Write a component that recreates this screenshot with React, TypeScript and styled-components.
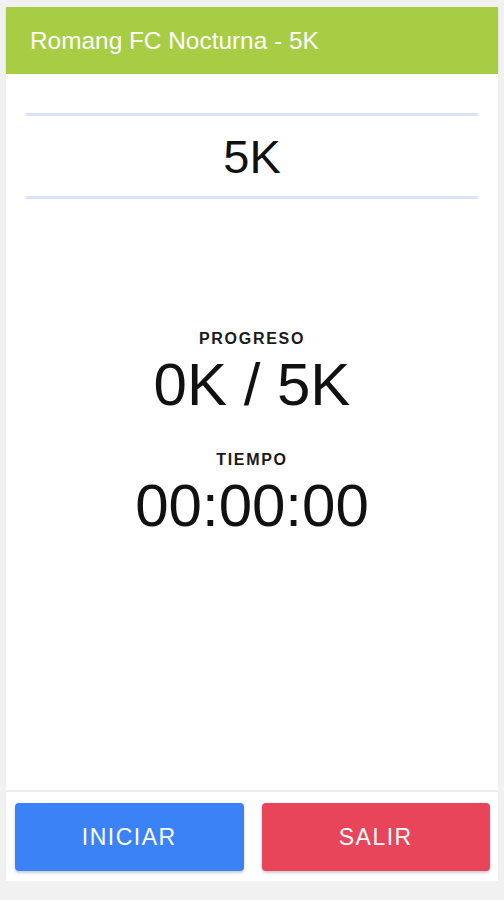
import styled, { createGlobalStyle } from "styled-components";

const GlobalStyle = createGlobalStyle`
  html, body {
    margin: 0;
    padding: 0;
    background: #f1f1f1;
    font-family: "Liberation Sans", Arial, sans-serif;
  }
`;

const Screen = styled.div`
  display: flex;
  flex-direction: column;
  margin: 7px 6px 0 6px;
  height: 874px;
`;

const Header = styled.header`
  display: flex;
  align-items: center;
  height: 67px;
  padding: 0 24px;
  background: #a7cd45;
  color: #fff;
  font-size: 24.4px;
  box-shadow: 0 1px 2px rgba(0, 0, 0, 0.12);
`;

const Body = styled.main`
  flex: 1;
  display: flex;
  flex-direction: column;
  background: #fff;
  padding: 39px 20px 0 20px;
`;

const Distance = styled.div`
  border-top: 3px solid #d7e5f6;
  border-bottom: 3px solid #d7e5f6;
  height: 80px;
  display: flex;
  align-items: center;
  justify-content: center;
  font-size: 47px;
  color: #111;
`;

const Stats = styled.div`
  display: flex;
  flex-direction: column;
  align-items: center;
  margin-top: 131px;
  color: #111;
`;

const Label = styled.div<{ $gap?: number }>`
  font-size: 16px;
  line-height: 18px;
  font-weight: bold;
  letter-spacing: 1.7px;
  color: #1a1a1a;
  margin-top: ${(p) => p.$gap ?? 0}px;
  margin-bottom: 3px;
`;

const Value = styled.div`
  font-size: 60px;
  line-height: 68px;
`;

const Footer = styled.footer`
  display: grid;
  grid-template-columns: 1fr 1fr;
  gap: 18px;
  padding: 11px 8px 10px 9px;
  background: #fff;
  border-top: 2px solid #eeeeee;
`;

const Button = styled.button<{ $color: string }>`
  height: 68px;
  border: none;
  border-radius: 4px;
  background: ${(p) => p.$color};
  color: #fff;
  font-family: "Liberation Sans", Arial, sans-serif;
  font-size: 23px;
  letter-spacing: 1.5px;
  box-shadow: 0 2px 3px rgba(0, 0, 0, 0.2);
`;

export default function App() {
  return (
    <>
      <GlobalStyle />
      <Screen>
        <Header>Romang FC Nocturna - 5K</Header>
        <Body>
          <Distance>5K</Distance>
          <Stats>
            <Label>PROGRESO</Label>
            <Value>0K / 5K</Value>
            <Label $gap={32}>TIEMPO</Label>
            <Value>00:00:00</Value>
          </Stats>
        </Body>
        <Footer>
          <Button $color="#3b82f6">INICIAR</Button>
          <Button $color="#e8455b">SALIR</Button>
        </Footer>
      </Screen>
    </>
  );
}
